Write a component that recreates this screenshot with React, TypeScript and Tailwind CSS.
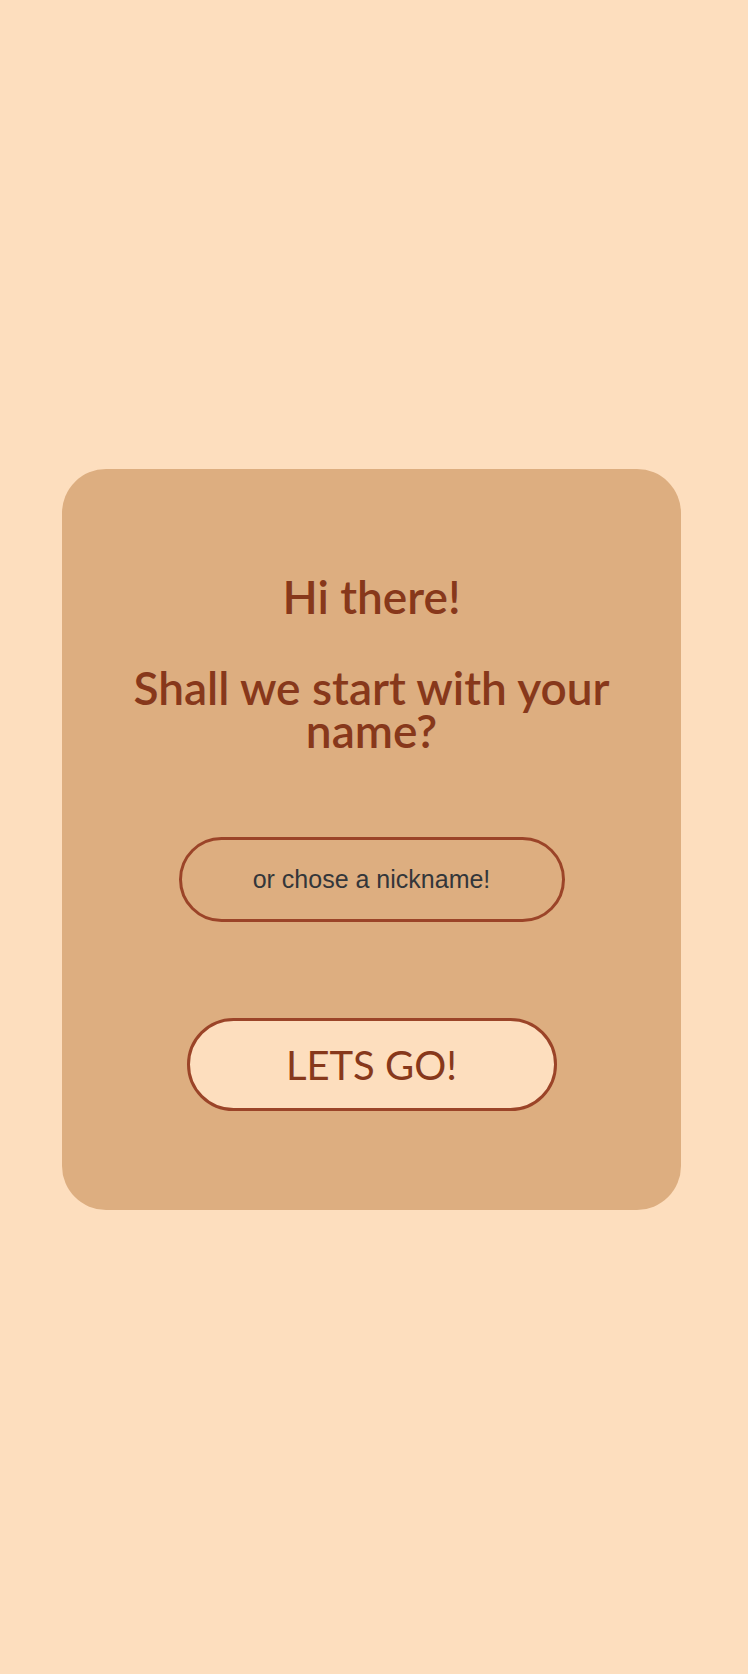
import React from "react";

export default function App() {
  return (
    <div className="min-h-screen w-full bg-[#fddebe] flex items-center justify-center pr-[5px] pt-[5px] font-['Lato',sans-serif]">
      <div className="w-[619px] rounded-[44px] bg-[#ddae80] flex flex-col items-center pt-[106px] pb-[99px]">
        <h1 className="text-center text-[#87381b] font-semibold">
          <span className="block text-[46px] leading-[43px]">Hi there!</span>
          <span className="block mt-[48px] text-[46px] leading-[43px]">
            Shall we start with your
            <br />
            name?
          </span>
        </h1>
        <input
          type="text"
          placeholder="or chose a nickname!"
          className="mt-[85px] w-[386px] h-[85px] rounded-full border-[3px] border-[#9b4428] bg-transparent text-center text-[25px] text-[#333333] placeholder:text-[#33363a] outline-none font-['Liberation_Sans',Arial,sans-serif]"
        />
        <button className="mt-[96px] w-[370px] h-[93px] rounded-full border-[3px] border-[#9b4428] bg-[#fddebe] text-[40px] text-[#87381b]">
          LETS GO!
        </button>
      </div>
    </div>
  );
}
